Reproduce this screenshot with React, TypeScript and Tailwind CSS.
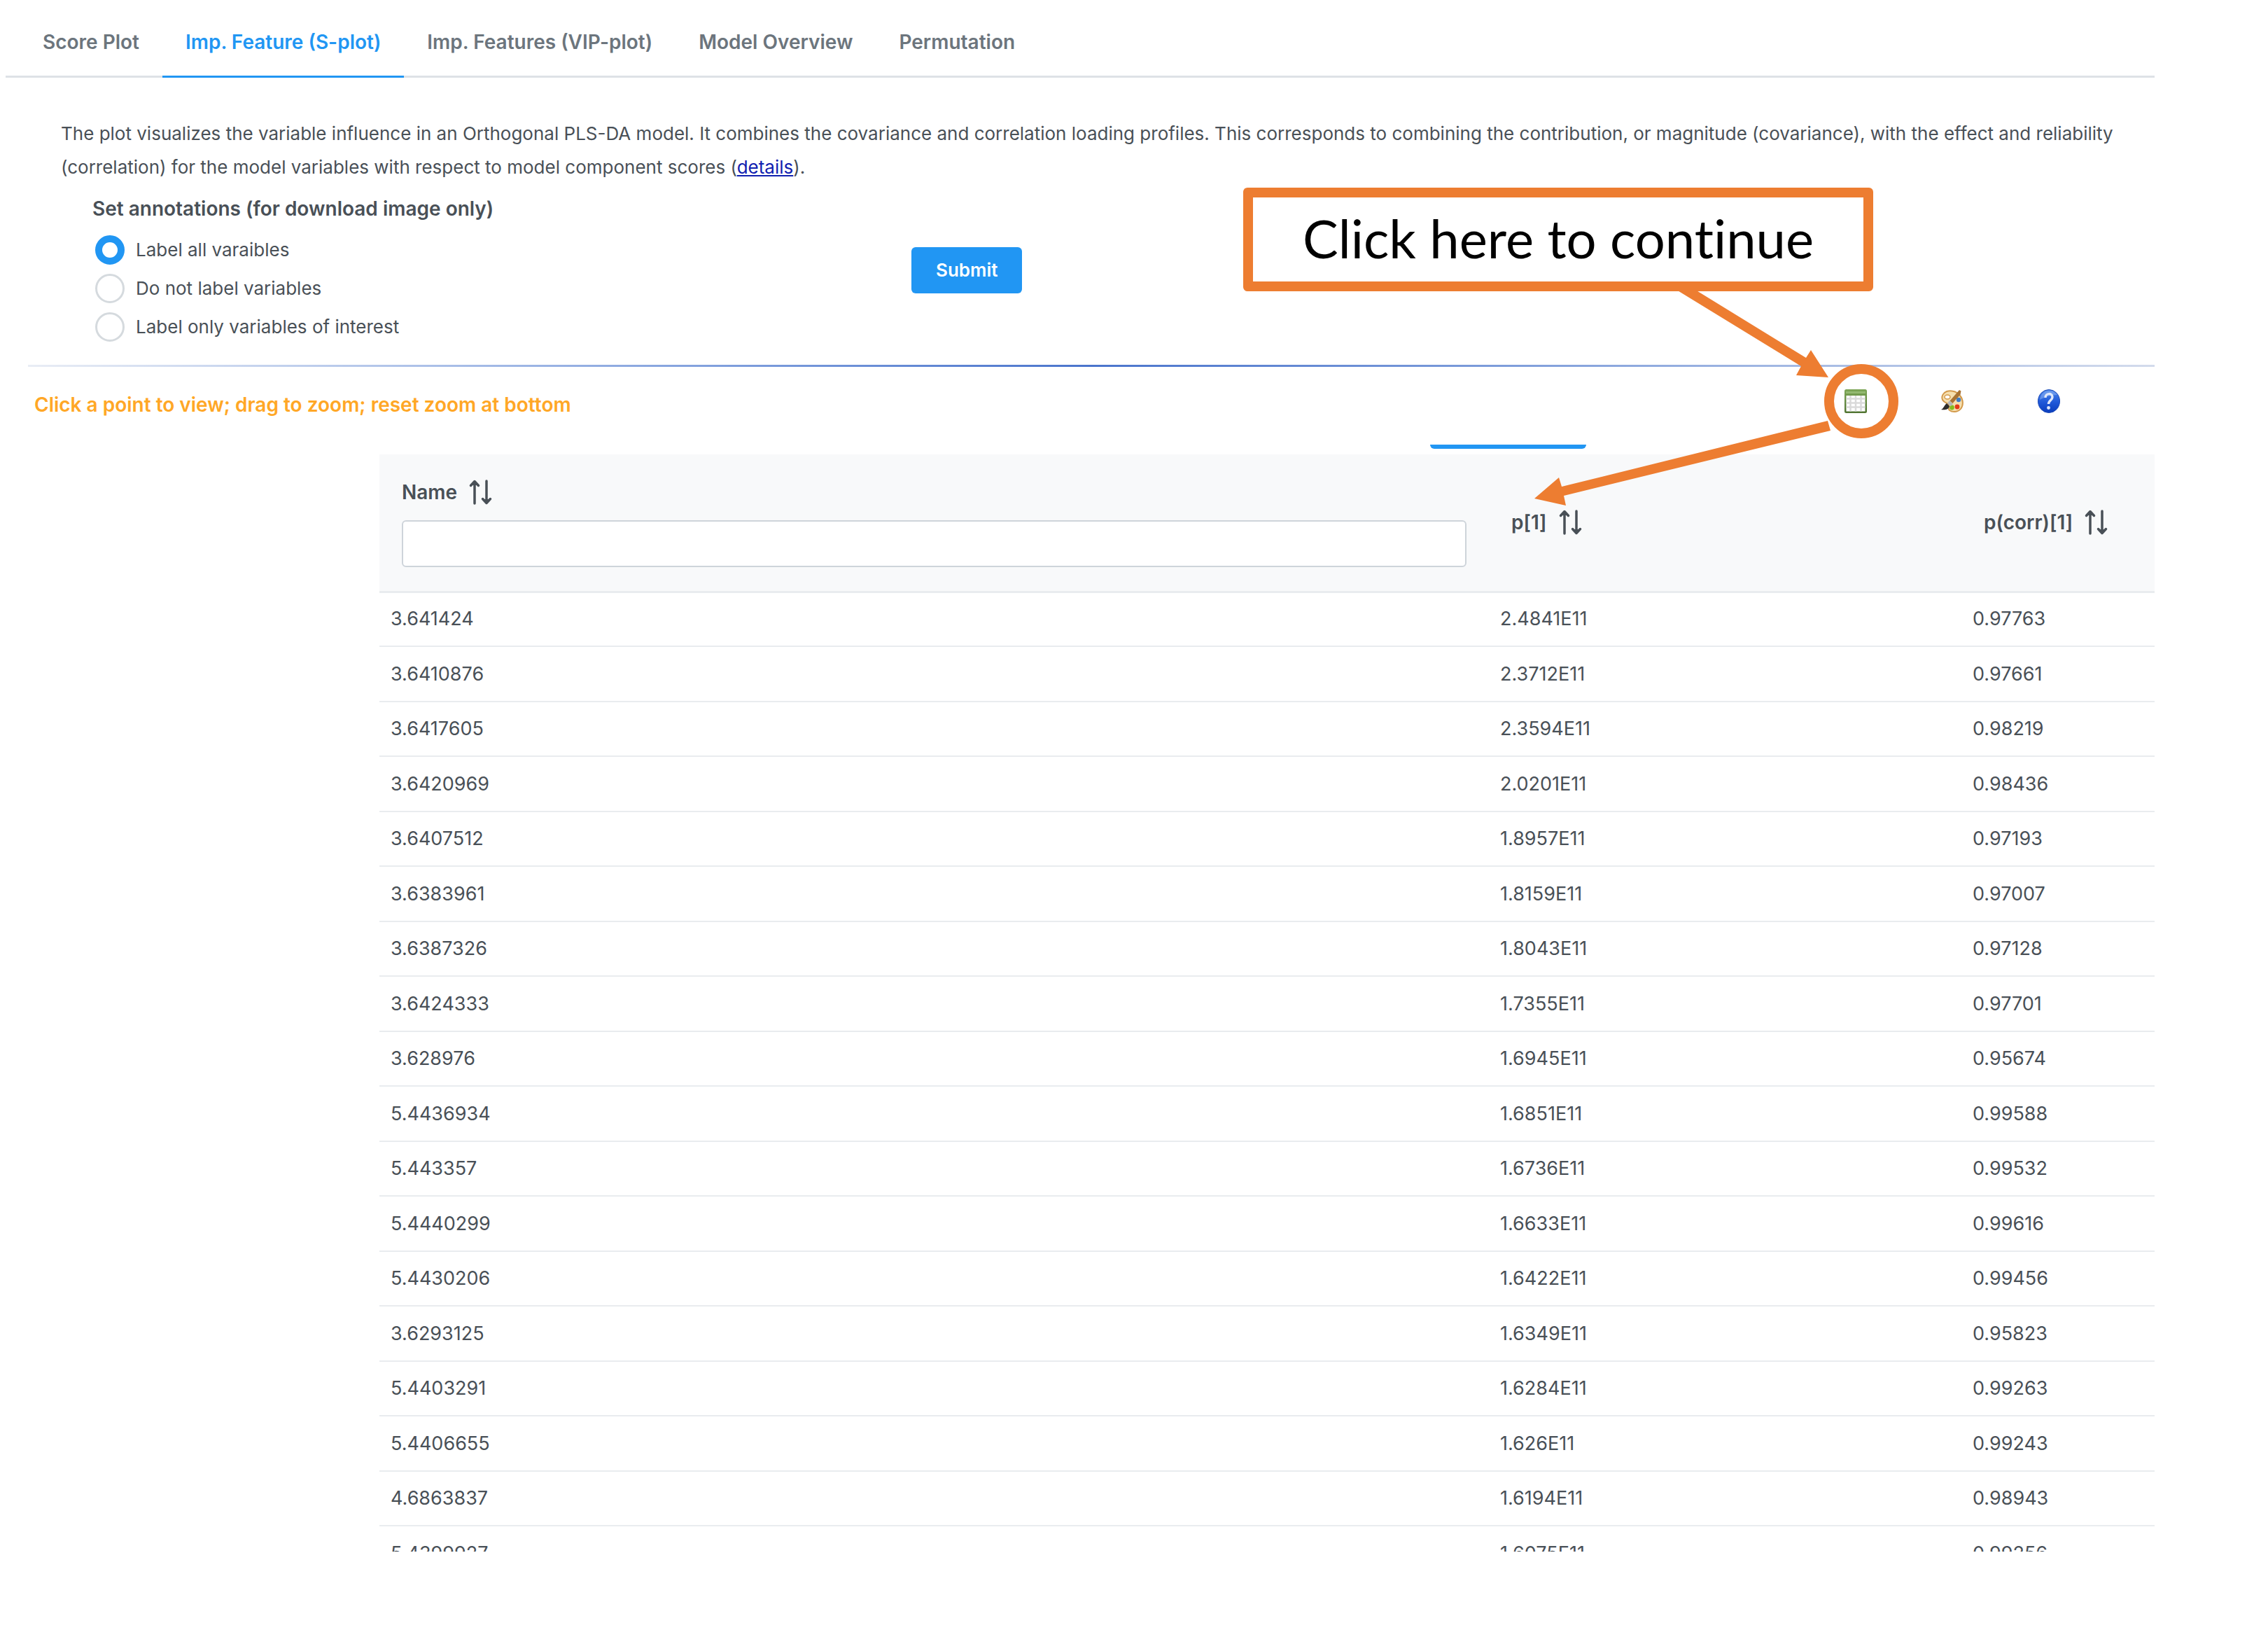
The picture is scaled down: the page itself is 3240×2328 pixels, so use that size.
import React, { useState } from "react";

const tabs = [
  "Score Plot",
  "Imp. Feature (S-plot)",
  "Imp. Features (VIP-plot)",
  "Model Overview",
  "Permutation",
];

const annotationModes = [
  "Label all varaibles",
  "Do not label variables",
  "Label only variables of interest",
];

const rows = [
  ["3.641424", "2.4841E11", "0.97763"],
  ["3.6410876", "2.3712E11", "0.97661"],
  ["3.6417605", "2.3594E11", "0.98219"],
  ["3.6420969", "2.0201E11", "0.98436"],
  ["3.6407512", "1.8957E11", "0.97193"],
  ["3.6383961", "1.8159E11", "0.97007"],
  ["3.6387326", "1.8043E11", "0.97128"],
  ["3.6424333", "1.7355E11", "0.97701"],
  ["3.628976", "1.6945E11", "0.95674"],
  ["5.4436934", "1.6851E11", "0.99588"],
  ["5.443357", "1.6736E11", "0.99532"],
  ["5.4440299", "1.6633E11", "0.99616"],
  ["5.4430206", "1.6422E11", "0.99456"],
  ["3.6293125", "1.6349E11", "0.95823"],
  ["5.4403291", "1.6284E11", "0.99263"],
  ["5.4406655", "1.626E11", "0.99243"],
  ["4.6863837", "1.6194E11", "0.98943"],
  ["5.4399927", "1.6075E11", "0.99256"],
];

function SortIcon() {
  return (
    <svg
      viewBox="0 0 34 36"
      className="h-9 w-[34px]"
      fill="none"
      stroke="currentColor"
      strokeWidth="3.500"
      strokeLinecap="round"
      strokeLinejoin="round"
      aria-hidden="true"
    >
      <path d="M9 34V3M3.500 8.500L9 2.500l5.500 6" />
      <path d="M26 2v31M20.500 27.500L26 33.500l5.500-6" />
      <path d="M5.500 8L9 4l3.500 4zM22.500 28L26 32l3.500-4z" fill="currentColor" stroke="none" />
    </svg>
  );
}

function TableIcon() {
  return (
    <svg viewBox="0 0 32 34" className="h-[34px] w-8" aria-hidden="true">
      <defs>
        <linearGradient id="sheet" x1="0" y1="0" x2="0" y2="1">
          <stop offset="0" stopColor="#7da657" />
          <stop offset="1" stopColor="#4f7330" />
        </linearGradient>
      </defs>
      <rect width="32" height="34" rx="2.500" fill="url(#sheet)" />
      <rect x="2" y="3" width="28" height="3" fill="#93b971" />
      <rect x="2.500" y="9" width="27" height="22.500" fill="#fff" />
      <path
        d="M8.500 9v22.500M16 9v22.500M23.500 9v22.500M2.500 13.500h27M2.500 19.500h27M2.500 25.500h27"
        stroke="#dadada"
        strokeWidth="2.500"
      />
    </svg>
  );
}

function PaletteIcon() {
  return (
    <svg viewBox="0 0 32 34" className="h-[34px] w-8" aria-hidden="true">
      <path
        d="M8 3C14 1 23 3 27 9c5 6 5 14 1 19-4 5-12 5-16 2-3-3 0-6-2-9-2-2-6-2-8-6C0 10 3 5 8 3z"
        fill="#f6dfae"
        stroke="#d39a4c"
        strokeWidth="2"
      />
      <ellipse cx="9" cy="11" rx="4" ry="3" fill="#fff" stroke="#d39a4c" strokeWidth="1.500" />
      <circle cx="25" cy="15" r="3.200" fill="#3f7cc4" />
      <circle cx="23" cy="25" r="3.400" fill="#e23a17" />
      <circle cx="15.500" cy="26" r="3.400" fill="#86bc1e" />
      <path d="M26 1l2.500 1.500-1 5-11 12.500-4-3.500z" fill="#a87333" />
      <path d="M12 16l5 5-3 3-5-4z" fill="#b4b7bb" />
      <path d="M8 20l4 4c-1 5-7 6-12 5 4-2 4-6 8-9z" fill="#2d2d2d" />
    </svg>
  );
}

function HelpIcon() {
  return (
    <svg viewBox="0 0 32 34" className="h-[34px] w-8" aria-hidden="true">
      <defs>
        <linearGradient id="ball" x1="0" y1="0" x2="0" y2="1">
          <stop offset="0" stopColor="#4d86e8" />
          <stop offset="0.550" stopColor="#1f58d8" />
          <stop offset="1" stopColor="#0a3dbc" />
        </linearGradient>
      </defs>
      <ellipse cx="16" cy="17" rx="15.500" ry="16.500" fill="url(#ball)" stroke="#1f4cb8" />
      <path d="M3 15C4 6 10 2 17 2c5 0 9 3 11 6-9 0-18 3-25 7z" fill="#8fb5f5" opacity="0.500" />
      <path
        d="M11 12c0-7 10-7 10-1 0 5-5.500 4.500-5.500 10"
        fill="none"
        stroke="#dfe8fa"
        strokeWidth="3.500"
      />
      <circle cx="15.500" cy="26.500" r="2.400" fill="#dfe8fa" />
    </svg>
  );
}

function Callout() {
  return (
    <div className="pointer-events-none absolute top-0 right-0 h-[760px] w-[1480px]">
      <div className="absolute top-[268px] left-4 flex h-[148px] w-[900px] items-center justify-center rounded-md border-14 border-[#ed7d31] bg-white pb-1 font-[Lato,sans-serif] text-[76px] leading-none text-black [font-variant-ligatures:none]">
        Click here to continue
      </div>
      <svg viewBox="0 0 1480 760" className="absolute inset-0 h-full w-full" aria-hidden="true">
        <g fill="#ed7d31">
          <path d="M635 414L813 523L806 536L852 539L827 500L820 511L662 414Z" />
          <path d="M851 601L471 695L467 682L432 712L477 722L474 708L855 615Z" />
        </g>
        <circle cx="899" cy="573" r="46" fill="none" stroke="#ed7d31" strokeWidth="14" />
      </svg>
    </div>
  );
}

export default function App() {
  const [tab, setTab] = useState(1);
  const [mode, setMode] = useState(0);

  return (
    <div className="relative flex h-screen flex-col overflow-hidden bg-white pr-[5%] pb-28 font-[Inter,sans-serif] text-[27px] text-[#495057]">
      <nav
        className="ml-2 flex border-b-3 border-[#dee2e6] pl-5 text-[28px] font-semibold"
        role="tablist"
      >
        {tabs.map((name, i) => (
          <button
            key={name}
            role="tab"
            aria-selected={i === tab}
            onClick={() => setTab(i)}
            className={
              i === tab
                ? "-mb-[3px] border-b-3 border-[#2196f3] px-[33px] pt-10 pb-7 leading-10 text-[#2196f3]"
                : "-mb-[3px] border-b-3 border-transparent px-[33px] pt-10 pb-7 leading-10 text-[#6c757d]"
            }
          >
            {name}
          </button>
        ))}
      </nav>

      <p className="mt-14 ml-[87px] text-[26px] leading-[48px]">
        The plot visualizes the variable influence in an Orthogonal PLS-DA model. It combines the
        covariance and correlation loading profiles. This corresponds to combining the contribution,
        or magnitude (covariance), with the effect and reliability (correlation) for the model
        variables with respect to model component scores (
        <a href="#details" className="text-[#1020b0] underline">
          details
        </a>
        ).
      </p>

      <form
        className="mt-[15px] ml-[132px] flex items-center text-[26px] leading-10"
        onSubmit={(e) => e.preventDefault()}
      >
        <fieldset className="w-[1170px]">
          <legend className="mb-[11px] text-[28px] font-semibold">
            Set annotations (for download image only)
          </legend>
          {annotationModes.map((name, i) => (
            <label key={name} className="flex h-[55px] items-center gap-4 pl-1">
              <input
                type="radio"
                name="annotations"
                checked={i === mode}
                onChange={() => setMode(i)}
                className="size-[42px] appearance-none rounded-full border-3 border-[#d5dade] bg-white checked:border-10 checked:border-[#2196f3]"
              />
              {name}
            </label>
          ))}
        </fieldset>
        <button
          type="submit"
          className="h-[66px] rounded-md bg-[#2196f3] px-[35px] font-semibold text-white"
        >
          Submit
        </button>
      </form>

      <hr className="mt-[27px] ml-10 h-[3px] shrink-0 border-0 bg-linear-to-r from-[#e9edf5] via-[#4a74cc] to-[#d3dbec]" />

      <div className="ml-[49px] flex h-[111px] shrink-0 items-start pt-8 pr-[135px]">
        <p className="grow text-[28px] leading-11 font-semibold text-[#ffa726]">
          Click a point to view; drag to zoom; reset zoom at bottom
        </p>
        <div className="flex gap-[106px]">
          <button aria-label="View data table">
            <TableIcon />
          </button>
          <button aria-label="Edit colours">
            <PaletteIcon />
          </button>
          <button aria-label="Help">
            <HelpIcon />
          </button>
        </div>
      </div>

      <div className="ml-[542px] flex min-h-0 grow flex-col gap-2">
        <div className="ml-[59.2%] h-1.5 w-[223px] shrink-0 rounded-b-md bg-[#2196f3]" />
        <div className="min-h-0 grow overflow-hidden">
          <table className="w-full table-fixed border-collapse text-left">
            <colgroup>
              <col />
              <col className="w-[675px]" />
              <col className="w-[276px]" />
            </colgroup>
            <thead className="border-b-3 border-[#e9ecef] bg-[#f8f9fa] text-[28px]">
              <tr className="h-[196px]">
                <th className="px-8 font-semibold">
                  <div className="flex flex-col gap-5">
                    <label htmlFor="name-filter" className="flex items-center gap-4 leading-10">
                      Name <SortIcon />
                    </label>
                    <input
                      id="name-filter"
                      type="text"
                      className="h-[67px] w-full rounded-md border-2 border-[#ced4da] bg-white px-4 font-normal"
                    />
                  </div>
                </th>
                <th className="px-8 font-semibold">
                  <div className="flex items-center gap-4 leading-10">
                    p[1] <SortIcon />
                  </div>
                </th>
                <th className="pl-8 font-semibold">
                  <div className="flex items-center gap-4 leading-10">
                    p(corr)[1] <SortIcon />
                  </div>
                </th>
              </tr>
            </thead>
            <tbody>
              {rows.map((row) => (
                <tr key={row[0]} className="h-[78px] border-b-2 border-[#e9ecef] even:h-[79px]">
                  {row.map((value) => (
                    <td key={value} className="px-4 leading-10">
                      {value}
                    </td>
                  ))}
                </tr>
              ))}
            </tbody>
          </table>
        </div>
      </div>

      <Callout />
    </div>
  );
}
